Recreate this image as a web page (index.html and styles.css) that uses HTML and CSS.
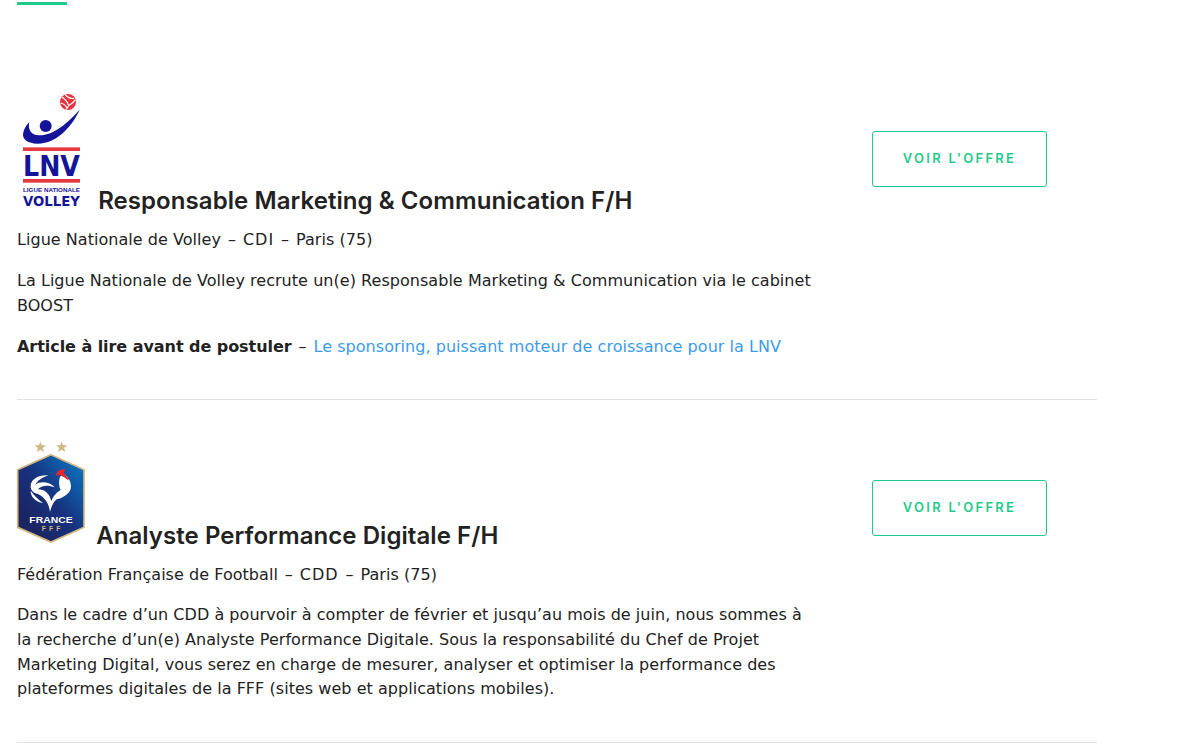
FILE: index.html
```html
<!DOCTYPE html>
<html lang="fr">
<head>
<meta charset="utf-8">
<title>Offres</title>
<link rel="stylesheet" href="styles.css">
</head>
<body>
<div class="page">
  <div class="accent"></div>
  <article class="job job-first">
    <div class="job-main">
      <h3 class="job-title">
        <svg class="logo logo-lnv" viewBox="66 24 180 348" width="60" height="116" aria-label="LNV">
          <circle cx="204" cy="51" r="24" fill="#e8323c"/>
          <path d="M186 36 C196 44 204 50 206 62 M206 62 C212 58 220 54 226 44 M196 30 C204 38 212 42 222 40 M182 54 C190 56 198 60 202 72 M206 62 C204 68 200 72 196 74" stroke="#fff" stroke-width="3.5" fill="none"/>
          <path d="M239 74 C222 112 178 176 112 176 C84 176 68 164 69 148 C70 134 78 122 88 111 C84 128 88 150 118 151 C160 152 205 112 239 74 Z" fill="#14149a"/>
          <circle cx="137" cy="123" r="18" fill="#14149a"/>
          <rect x="69" y="187" width="171" height="11" fill="#e63a42"/>
          <text class="lnv-big" x="69" y="272" textLength="171" lengthAdjust="spacingAndGlyphs">LNV</text>
          <rect x="69" y="282" width="171" height="11" fill="#e63a42"/>
          <text class="lnv-small" x="69" y="320" textLength="171" lengthAdjust="spacingAndGlyphs">LIGUE NATIONALE</text>
          <text class="lnv-volley" x="69" y="364" textLength="171" lengthAdjust="spacingAndGlyphs">VOLLEY</text>
        </svg>
        <span>Responsable Marketing &amp; Communication F/H</span>
      </h3>
      <p class="meta">Ligue Nationale de Volley <span class="dash">–</span> <span class="caps">CDI</span> <span class="dash">–</span> Paris (75)</p>
      <p>La Ligue Nationale de Volley recrute un(e) Responsable Marketing &amp; Communication via le cabinet BOOST</p>
      <p><strong>Article à lire avant de postuler</strong> <span class="dash">–</span> <a href="#">Le sponsoring, puissant moteur de croissance pour la LNV</a></p>
    </div>
    <a class="btn" href="#">VOIR L'OFFRE</a>
  </article>
  <article class="job job-second">
    <div class="job-main">
      <h3 class="job-title">
        <svg class="logo logo-fff" viewBox="48 24 210 318" width="70" height="106" aria-label="FFF">
          <defs>
            <linearGradient id="shield" x1="0.9" y1="0.1" x2="0.2" y2="0.8">
              <stop offset="0" stop-color="#0a70bb"/>
              <stop offset="0.55" stop-color="#17337f"/>
              <stop offset="1" stop-color="#1b2563"/>
            </linearGradient>
          </defs>
          <path class="star" d="M121 34 L125 46 L138 46 L128 54 L132 66 L121 59 L110 66 L114 54 L104 46 L117 46 Z"/>
          <path class="star" d="M185 34 L189 46 L202 46 L192 54 L196 66 L185 59 L174 66 L178 54 L168 46 L181 46 Z"/>
          <path d="M153 74 L252 119 L252 292 L153 336 L53 292 L53 119 Z" fill="url(#shield)" stroke="#d3b67c" stroke-width="5"/>
          <path d="M92 172 C90 150 112 134 146 136 C128 142 114 150 106 164 C122 152 150 156 164 172 C144 164 124 166 114 178 C134 178 150 192 154 214 C158 200 168 188 182 180 C176 168 176 152 180 140 L192 132 C206 142 216 158 212 176 C208 192 188 204 170 208 C160 216 154 230 150 246 C146 214 128 196 106 190 C98 186 93 180 92 172 Z" fill="#fff"/>
          <path d="M92 182 C92 200 104 214 130 220 C114 208 102 196 92 182 Z" fill="#fff"/>
          <path d="M168 138 C168 124 180 116 196 118 L192 128 L200 140 L208 146 L204 150 L192 142 L178 134 Z" fill="#e3262e"/>
          <text class="fff-name" x="153" y="278" textLength="130" lengthAdjust="spacingAndGlyphs">FRANCE</text>
          <text class="fff-sub" x="153" y="303" textLength="56">FFF</text>
        </svg>
        <span>Analyste Performance Digitale F/H</span>
      </h3>
      <p class="meta">Fédération Française de Football <span class="dash">–</span> <span class="caps">CDD</span> <span class="dash">–</span> Paris (75)</p>
      <p class="summary">Dans le cadre d’un CDD à pourvoir à compter de février et jusqu’au mois de juin, nous sommes à la recherche d’un(e) Analyste Performance Digitale. Sous la responsabilité du Chef de Projet Marketing Digital, vous serez en charge de mesurer, analyser et optimiser la performance des plateformes digitales de la FFF (sites web et applications mobiles).</p>
    </div>
    <a class="btn" href="#">VOIR L'OFFRE</a>
  </article>
</div>
</body>
</html>
```
FILE: styles.css
```css
* { box-sizing: border-box; }
html, body { margin: 0; padding: 0; background: #fff; }
body {
  font-family: "DejaVu Sans", Verdana, sans-serif;
  font-size: 16px;
  line-height: 25px;
  letter-spacing: 0.04px;
  color: #222;
  overflow: hidden;
  height: 754px;
}
.page { width: 1097px; padding: 2px 0 0 17px; }
.accent { width: 50px; height: 3px; background: #1fcb8b; margin-bottom: 45px; }
.job {
  display: grid;
  grid-template-columns: 855px 175px;
  align-items: start;
  border-bottom: 1px solid #e2e2e2;
}
.job-first { padding: 43px 0 24px; }
.job-second { padding: 38px 0 14px; height: 343px; }
.job-main { width: 795px; }
.job-first .btn { margin-top: 38px; }
.job-second .btn { margin-top: 42px; }
.job-title {
  margin: 0 0 11px;
  font-family: "Inter", sans-serif;
  font-weight: 600;
  font-size: 24px;
  line-height: 30px;
  letter-spacing: 0.07px;
  color: #222;
  white-space: nowrap;
}
.logo { vertical-align: baseline; overflow: visible; }
.logo-lnv { margin-left: 5px; margin-right: 10px; }
.logo-fff { margin-left: -1px; margin-right: 4px; }
p { margin: 0 0 16px; }
.summary { line-height: 24.8px; }
.dash { margin: 0 1.8px; }
.caps { letter-spacing: 1px; }
strong { font-weight: 700; letter-spacing: -0.05px; }
a { color: #3d9be9; text-decoration: none; }
.btn {
  display: flex;
  align-items: center;
  justify-content: center;
  width: 175px;
  height: 56px;
  padding-bottom: 2px;
  border: 1px solid #1fcb8b;
  border-radius: 3px;
  color: #1fcb8b;
  font-family: "Inter", sans-serif;
  font-size: 13px;
  font-weight: 600;
  letter-spacing: 2.25px;
}
.star { fill: #cfb884; }
.lnv-big { font-family: "DejaVu Sans Condensed", "DejaVu Sans", sans-serif; font-weight: 700; font-size: 85px; fill: #14149a; }
.lnv-small { font-family: "Liberation Sans", sans-serif; font-weight: 700; font-size: 18.5px; fill: #14149a; }
.lnv-volley { font-family: "DejaVu Sans Condensed", "DejaVu Sans", sans-serif; font-weight: 700; font-size: 44px; fill: #14149a; }
.fff-name { font-family: "Liberation Sans", sans-serif; font-weight: 700; font-size: 26px; fill: #fff; text-anchor: middle; }
.fff-sub { font-family: "Liberation Sans", sans-serif; font-weight: 700; font-size: 20px; fill: #d3b67c; text-anchor: middle; }
```
